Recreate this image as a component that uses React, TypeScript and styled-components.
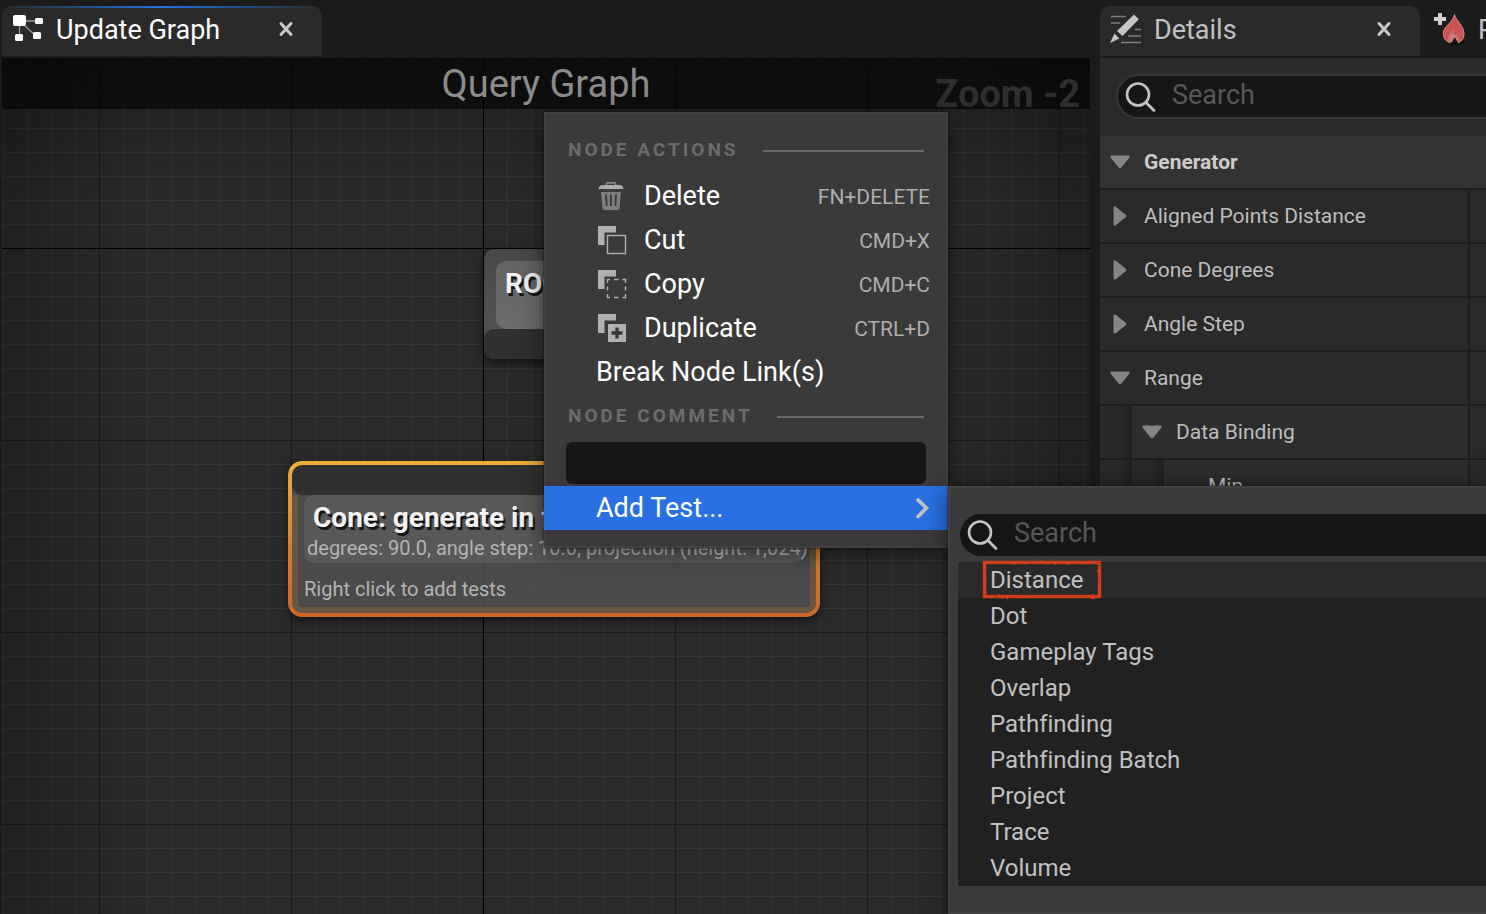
import React from "react";
import styled, { createGlobalStyle, css } from "styled-components";

const GlobalStyle = createGlobalStyle`
  *, *::before, *::after { box-sizing: border-box; }
  body {
    margin: 0;
    background: #1b1b1b;
    color: #c0c0c0;
    font-family: Roboto, "Liberation Sans", sans-serif;
    font-variant-ligatures: none;
  }
  button, input { font: inherit; color: inherit; border: 0; margin: 0; padding: 0; background: none; }
  button { cursor: pointer; text-align: left; }
`;

const Editor = styled.div`
  position: relative;
  display: grid;
  grid-template-columns: minmax(0, 1fr) 386px;
  column-gap: 10px;
  min-height: 100vh;
  padding-left: 2px;
  overflow: hidden;
`;

const Pane = styled.section`
  display: flex;
  flex-direction: column;
  gap: 2px;
  min-width: 0;
  overflow: hidden;
`;

/* ---------- tabs ---------- */

const TabBar = styled.div`
  display: flex;
  height: 56px;
  padding-top: 6px;
`;

const Tab = styled.div<{ $active?: boolean; $idle?: boolean }>`
  position: relative;
  display: flex;
  flex: none;
  align-items: center;
  width: 320px;
  padding: 0 24px 4px ${(p) => (p.$idle ? 14 : 10)}px;
  border-radius: 10px 10px 0 0;
  overflow: hidden;
  font-size: 27px;
  line-height: 32px;
  color: ${(p) => (p.$active ? "#ffffff" : "#c0c0c0")};
  background: ${(p) => (p.$idle ? "transparent" : "#2a2a2a")};
  ${(p) =>
    p.$active &&
    css`
      &::before {
        content: "";
        position: absolute;
        inset: 0 0 auto;
        height: 2px;
        background: linear-gradient(90deg, #2a2a2a, #1d4f86 25%, #2a6fe0 50%, #1d4f86 75%, #2a2a2a);
      }
    `}
`;

const TabTitle = styled.span`
  flex: 1;
  margin-left: 12px;
  padding-top: 2px;
  white-space: nowrap;
`;

const CloseButton = styled.button`
  display: flex;
  align-items: center;
  justify-content: center;
  width: 24px;
  height: 24px;
`;

/* ---------- graph canvas ---------- */

const Canvas = styled.div`
  position: relative;
  flex: 1;
  overflow: hidden;
  background-color: #2a2a2a;
  background-image:
    linear-gradient(90deg, rgba(0, 0, 0, 0.25), transparent 150px),
    linear-gradient(270deg, rgba(0, 0, 0, 0.25), transparent 150px),
    linear-gradient(180deg, rgba(0, 0, 0, 0.25), transparent 150px),
    linear-gradient(#000000, #000000),
    linear-gradient(#000000, #000000),
    linear-gradient(90deg, #191919 1px, transparent 1px),
    linear-gradient(180deg, #191919 1px, transparent 1px),
    linear-gradient(90deg, #363636 1px, transparent 1px),
    linear-gradient(180deg, #363636 1px, transparent 1px);
  background-size:
    auto, auto, auto,
    1px 100%, 100% 1px,
    192px 192px, 192px 192px,
    24px 24px, 24px 24px;
  background-position:
    0 0, 0 0, 0 0,
    481px 0, 0 190px,
    97px 0, 0 190px,
    1px 0, 0 22px;
  background-repeat:
    no-repeat, no-repeat, no-repeat,
    no-repeat, no-repeat,
    repeat, repeat, repeat, repeat;
`;

const GraphTitle = styled.h1`
  display: flex;
  align-items: center;
  justify-content: center;
  height: 51px;
  margin: 0;
  background: rgba(0, 0, 0, 0.6);
  color: #8c8c8c;
  font-size: 38px;
  font-weight: 400;
  line-height: 44px;
`;

const ZoomLabel = styled.div`
  position: absolute;
  top: 14px;
  right: 10px;
  color: #2e2e2e;
  font-size: 38px;
  font-weight: 700;
  line-height: 44px;
`;

const RootNode = styled.div`
  position: absolute;
  left: 482px;
  top: 191px;
  width: 190px;
  padding: 12px 12px 0;
  border-radius: 10px;
  overflow: hidden;
  background: linear-gradient(#484848, #555555);
  box-shadow: 0 4px 10px rgba(0, 0, 0, 0.6);
`;

const NodeHeading = styled.h2`
  margin: 0;
  color: #f2f2f2;
  font-size: 28px;
  font-weight: 700;
  line-height: 32px;
  text-shadow: 2px 3px 0 #161616;
  white-space: nowrap;
`;

const RootTitle = styled.div`
  height: 68px;
  padding: 7px 9px;
  border-radius: 10px;
  background: linear-gradient(#636363, #6c6c6c);
`;

const PinStrip = styled.div<{ $bottom?: boolean }>`
  height: 30px;
  background: #303030;
  border-radius: ${(p) => (p.$bottom ? "10px 10px 0 0" : "6px 6px 10px 10px")};
  margin: ${(p) => (p.$bottom ? "0 -12px" : "0")};
`;

const ConeNode = styled.div`
  position: absolute;
  left: 286px;
  top: 403px;
  width: 532px;
  padding: 4px;
  border-radius: 14px;
  background: rgba(80, 80, 80, 0.85);
  box-shadow: 0 4px 10px rgba(0, 0, 0, 0.5);

  &::before {
    content: "";
    position: absolute;
    inset: 0;
    padding: 4px;
    border-radius: 14px;
    background: linear-gradient(#efae3b, #d9822f 50%, #cd6627);
    mask: linear-gradient(#000 0 0) content-box exclude, linear-gradient(#000 0 0);
  }
`;

const ConeBody = styled.div`
  padding: 0 6px 4px;
  border: solid rgba(160, 110, 50, 0.35);
  border-width: 0 6px 6px;
  border-radius: 0 0 10px 10px;
`;

const ConeHeader = styled.div`
  height: 68px;
  padding: 7px 3px 0;
  border-radius: 10px;
  background: rgba(110, 110, 110, 0.4);

  ${NodeHeading} { padding-left: 6px; }
`;

const NodeText = styled.p`
  margin: 0;
  color: #b4b4b4;
  font-size: 20px;
  line-height: 28px;
  white-space: nowrap;
`;

const TestHint = styled(NodeText)`
  padding-top: 12px;
`;

/* ---------- details pane ---------- */

const DetailsBody = styled.div`
  flex: 1;
  background: #242424;
`;

const SearchRow = styled.div`
  padding: 16px 0 17px 16px;
  background: #2a2a2a;
`;

const SearchBox = styled.label<{ $framed?: boolean }>`
  display: flex;
  align-items: center;
  height: ${(p) => (p.$framed ? 45 : 42)}px;
  padding-left: 7px;
  border: solid #353535;
  border-width: ${(p) => (p.$framed ? "2px 0 2px 2px" : "0")};
  border-radius: 23px 0 0 23px;
  background: #161616;
`;

const SearchInput = styled.input`
  flex: 1;
  min-width: 0;
  height: 32px;
  margin: 0 0 4px 15px;
  outline: 0;
  font-size: 27px;
  line-height: 32px;
  &::placeholder { color: #575757; opacity: 1; }
`;

const Row = styled.div<{ $heading?: boolean }>`
  display: grid;
  grid-template-columns: ${(p) => (p.$heading ? "1fr" : "368px 1fr")};
  column-gap: 2px;
  height: 54px;
  padding-bottom: 2px;
  background: #1e1e1e;
`;

const NameCell = styled.div`
  display: flex;
  min-width: 0;
`;

const Indent = styled.span`
  width: 32px;
  background: linear-gradient(90deg, #292929 60%, #1f1f1f);
`;

const RowButton = styled.button<{ $heading?: boolean; $depth?: number }>`
  display: flex;
  flex: 1;
  align-items: center;
  padding-left: 10px;
  font-size: 21px;
  font-weight: ${(p) => (p.$heading ? 700 : 400)};
  line-height: 24px;
  color: ${(p) => (p.$heading ? "#cccccc" : "#bdbdbd")};
  background: ${(p) => (p.$heading ? "#333333" : p.$depth ? "#2d2d2d" : "#2a2a2a")};
`;

const ArrowSlot = styled.span`
  display: flex;
  align-items: center;
  justify-content: center;
  width: 20px;
  margin-right: 14px;
`;

const ValueCell = styled.div`
  background: #2a2a2a;
`;

/* ---------- menus ---------- */

const menuSurface = css`
  position: absolute;
  background: #3a3a3a;
  border: 2px solid #424242;
  box-shadow: 0 4px 24px rgba(0, 0, 0, 0.5), 0 0 2px #111111;
`;

const ContextMenu = styled.div`
  ${menuSurface}
  left: 544px;
  top: 112px;
  width: 404px;
  padding: 14px 0 16px;
`;

const MenuHeading = styled.div`
  display: flex;
  align-items: center;
  gap: 24px;
  height: 46px;
  padding: 0 22px;
  color: #6c6c6c;
  font-size: 19px;
  font-weight: 700;
  line-height: 24px;
  letter-spacing: 3px;
  white-space: nowrap;

  &::after {
    content: "";
    flex: 1;
    height: 2px;
    background: #6a6a6a;
  }
`;

const HeadingText = styled.span`
  padding-bottom: 2px;
`;

const MenuItem = styled.button<{ $selected?: boolean }>`
  display: flex;
  align-items: center;
  width: calc(100% + 4px);
  height: 44px;
  margin: 0 -2px;
  padding: 0 18px 0 52px;
  font-size: 27px;
  line-height: 32px;
  color: #ffffff;
  background: ${(p) => (p.$selected ? "#2970e2" : "transparent")};
`;

const ItemIcon = styled.span`
  display: flex;
  width: 32px;
  margin-right: 16px;
`;

const ItemLabel = styled.span`
  flex: 1;
`;

const Shortcut = styled.kbd`
  padding-top: 2px;
  font-family: inherit;
  font-size: 21px;
  color: #adadad;
`;

const CommentInput = styled.input`
  display: block;
  width: 360px;
  height: 42px;
  margin: 2px 20px;
  padding: 0 10px;
  border-radius: 6px;
  background: #161616;
  outline: 0;
  font-size: 21px;
`;

const TestMenu = styled.div`
  ${menuSurface}
  left: 948px;
  right: 0;
  top: 486px;
  padding: 26px 0 26px 8px;
  border-right: 0;

  ${SearchBox} { margin: 0 0 6px 2px; }
`;

const TestList = styled.ul`
  margin: 0;
  padding: 0;
  list-style: none;
  background: #212121;
`;

const TestItem = styled.li<{ $hover?: boolean }>`
  position: relative;
  height: 36px;
  background: ${(p) => (p.$hover ? "#2a2a2a" : "transparent")};
`;

const TestButton = styled.button`
  display: block;
  width: 100%;
  height: 36px;
  padding-left: 32px;
  font-size: 24px;
  line-height: 36px;
`;

const Marker = styled.svg`
  position: absolute;
  left: 22px;
  top: -4px;
  pointer-events: none;
`;

/* ---------- icons ---------- */

const GraphIcon = () => (
  <svg width="32" height="32" viewBox="0 0 32 32" aria-hidden="true">
    <path d="M12 8H26M7.500 10V24M12 12L25 24" stroke="#9a9a9a" strokeWidth="1.300" fill="none" />
    <g fill="#ffffff">
      <rect x="1" y="2" width="13" height="11" rx="2" />
      <rect x="23" y="5" width="8" height="6" rx="1.500" />
      <rect x="3" y="21" width="8" height="7" rx="1.500" />
      <rect x="21" y="19" width="8" height="7" rx="1.500" />
    </g>
  </svg>
);

const DetailsIcon = () => (
  <svg width="32" height="32" viewBox="0 0 32 32" aria-hidden="true">
    <path d="M1 3.500H16M1 10H10M25 16.500H31M18 23H31M11 29.500H31" stroke="#7d7d7d" strokeWidth="1.300" />
    <path d="M24 1.500L28.800 6.200 12.500 23 7 18z" fill="#c4c4c4" />
    <path d="M4.500 20.500L9.500 25.500 0 30z" fill="#c4c4c4" />
  </svg>
);

const FireIcon = () => (
  <svg width="32" height="34" viewBox="0 0 32 34" aria-hidden="true">
    <ellipse cx="20.500" cy="30" rx="10" ry="2.500" fill="#0c0c0c" />
    <path
      d="M20.500 2.500C21.500 8 30 13.500 30 22c0 4.500-2.500 7.500-5.500 8.800.8-3.300 0-6.300-1.800-8.600L20.500 25.500l-1.200-7.300c-3.500 3.300-5.300 8.300-3.800 12.600C11.700 29 9.300 26 9.300 21.500 9.300 14 19 11 20.500 2.500z"
      fill="#c95450"
      stroke="#d98a86"
      strokeWidth="1"
    />
    <path d="M15.500 30.500C14.500 26 16 22 18.700 19.800L20.500 25.500l2-2.300c1.700 2.500 2 4.800 1.200 7.300l-2.900-5-3 5z" fill="#d77b77" />
    <path d="M17.800 30.800l3-5.300 2.800 5.300z" fill="#151515" />
    <path d="M4 1h4v4h4v4H8v4H4V9H0V5h4z" fill="#cfcfcf" />
  </svg>
);

const CloseIcon = () => (
  <svg width="16" height="16" viewBox="0 0 16 16" aria-hidden="true">
    <path d="M3 2.500L13 13.500M13 2.500L3 13.500" stroke="#c8c8c8" strokeWidth="3" strokeLinecap="round" />
  </svg>
);

const SearchIcon = () => (
  <svg width="32" height="32" viewBox="0 0 32 32" aria-hidden="true">
    <circle cx="13" cy="13.500" r="11" stroke="#c4c4c4" strokeWidth="2.600" fill="none" />
    <path d="M21 21.500L29 29.500" stroke="#c4c4c4" strokeWidth="2.800" strokeLinecap="round" />
  </svg>
);

const Arrow = ({ open }: { open: boolean }) =>
  open ? (
    <svg width="20" height="14" viewBox="0 0 20 14" aria-hidden="true">
      <path d="M1 1H19V2.500L10.500 13H9.500L1 2.500z" fill="#858585" stroke="#858585" strokeLinejoin="round" />
    </svg>
  ) : (
    <svg width="14" height="20" viewBox="0 0 14 20" aria-hidden="true">
      <path d="M1 1H2.500L13 9.500V10.500L2.500 19H1z" fill="#858585" stroke="#858585" strokeLinejoin="round" />
    </svg>
  );

const TrashIcon = () => (
  <svg width="32" height="32" viewBox="0 0 32 32" aria-hidden="true">
    <path d="M10.500 5.500V4Q10.500 2.800 11.500 2.800H18.500Q19.500 2.800 19.500 4V5.500" stroke="#858585" strokeWidth="1.800" fill="none" />
    <path d="M2.500 9Q3 5 7 5H23Q27 5 27.500 9z" fill="#adadad" />
    <path d="M5 12H25L23.600 28Q23.400 30 21.500 30H8.500Q6.600 30 6.400 28z" fill="#7e7e7e" />
    <path d="M10 14.500L10.700 26M15 14.500V26M20 14.500L19.300 26" stroke="#3a3a3a" strokeWidth="1.900" />
  </svg>
);

const BackSquare = () => <path d="M2 2H20V8.500H8.500V21H2z" fill="#b0b0b0" />;

const CutIcon = () => (
  <svg width="32" height="32" viewBox="0 0 32 32" aria-hidden="true">
    <BackSquare />
    <rect x="11.500" y="11.500" width="18" height="18" stroke="#b0b0b0" strokeWidth="1.400" fill="none" />
  </svg>
);

const CopyIcon = () => (
  <svg width="32" height="32" viewBox="0 0 32 32" aria-hidden="true">
    <BackSquare />
    <path
      d="M11.500 15V11.500H14M18 11.500H22.500M26.500 11.500H29.500V15M29.500 18.500V22.500M29.500 26V29.500H26.500M22.500 29.500H18M14 29.500H11.500V26M11.500 22.500V18.500"
      stroke="#b0b0b0"
      strokeWidth="1.400"
      fill="none"
    />
  </svg>
);

const DuplicateIcon = () => (
  <svg width="32" height="32" viewBox="0 0 32 32" aria-hidden="true">
    <BackSquare />
    <rect x="12" y="12" width="18" height="18" fill="#b0b0b0" />
    <path d="M21 15.500V26.500M15.500 21H26.500" stroke="#3a3a3a" strokeWidth="3.400" />
  </svg>
);

const ChevronIcon = () => (
  <svg width="16" height="22" viewBox="0 0 16 22" aria-hidden="true">
    <path d="M4 3L12.500 11L4 19.500" stroke="#c4c4c4" strokeWidth="3.600" strokeLinecap="round" fill="none" />
  </svg>
);

/* ---------- data ---------- */

const menuActions = [
  { label: "Delete", shortcut: "FN+DELETE", icon: <TrashIcon /> },
  { label: "Cut", shortcut: "CMD+X", icon: <CutIcon /> },
  { label: "Copy", shortcut: "CMD+C", icon: <CopyIcon /> },
  { label: "Duplicate", shortcut: "CTRL+D", icon: <DuplicateIcon /> },
];

const tests = [
  "Distance",
  "Dot",
  "Gameplay Tags",
  "Overlap",
  "Pathfinding",
  "Pathfinding Batch",
  "Project",
  "Trace",
  "Volume",
];

type Property = { name: string; depth: number; open?: boolean; heading?: boolean };

const properties: Property[] = [
  { name: "Generator", depth: 0, open: true, heading: true },
  { name: "Aligned Points Distance", depth: 0, open: false },
  { name: "Cone Degrees", depth: 0, open: false },
  { name: "Angle Step", depth: 0, open: false },
  { name: "Range", depth: 0, open: true },
  { name: "Data Binding", depth: 1, open: true },
  { name: "Min", depth: 2 },
];

const PropertyRow = ({ name, depth, open, heading }: Property) => (
  <Row $heading={heading}>
    <NameCell>
      {Array.from({ length: depth }, (_, i) => (
        <Indent key={i} />
      ))}
      <RowButton $heading={heading} $depth={depth} aria-expanded={open}>
        <ArrowSlot>{open !== undefined && <Arrow open={open} />}</ArrowSlot>
        {name}
      </RowButton>
    </NameCell>
    {!heading && <ValueCell />}
  </Row>
);

export default function App() {
  return (
    <>
      <GlobalStyle />
      <Editor>
        <Pane>
          <TabBar>
            <Tab $active>
              <GraphIcon />
              <TabTitle>Update Graph</TabTitle>
              <CloseButton aria-label="Close Update Graph">
                <CloseIcon />
              </CloseButton>
            </Tab>
          </TabBar>
          <Canvas>
            <GraphTitle>Query Graph</GraphTitle>
            <ZoomLabel>Zoom -2</ZoomLabel>
            <RootNode>
              <RootTitle>
                <NodeHeading>ROOT</NodeHeading>
              </RootTitle>
              <PinStrip $bottom />
            </RootNode>
            <ConeNode>
              <PinStrip />
              <ConeBody>
                <ConeHeader>
                  <NodeHeading>Cone: generate in front of</NodeHeading>
                  <NodeText>degrees: 90.0, angle step: 10.0, projection (height: 1,024)</NodeText>
                </ConeHeader>
                <TestHint>Right click to add tests</TestHint>
              </ConeBody>
            </ConeNode>
          </Canvas>
        </Pane>

        <Pane>
          <TabBar>
            <Tab>
              <DetailsIcon />
              <TabTitle>Details</TabTitle>
              <CloseButton aria-label="Close Details">
                <CloseIcon />
              </CloseButton>
            </Tab>
            <Tab $idle>
              <FireIcon />
              <TabTitle>P</TabTitle>
            </Tab>
          </TabBar>
          <DetailsBody>
            <SearchRow>
              <SearchBox $framed>
                <SearchIcon />
                <SearchInput type="text" placeholder="Search" aria-label="Search details" />
              </SearchBox>
            </SearchRow>
            {properties.map((p) => (
              <PropertyRow key={p.name} {...p} />
            ))}
          </DetailsBody>
        </Pane>

        <ContextMenu>
          <MenuHeading>
            <HeadingText>NODE ACTIONS</HeadingText>
          </MenuHeading>
          {menuActions.map((a) => (
            <MenuItem key={a.label}>
              <ItemIcon>{a.icon}</ItemIcon>
              <ItemLabel>{a.label}</ItemLabel>
              <Shortcut>{a.shortcut}</Shortcut>
            </MenuItem>
          ))}
          <MenuItem>Break Node Link(s)</MenuItem>
          <MenuHeading>
            <HeadingText>NODE COMMENT</HeadingText>
          </MenuHeading>
          <CommentInput type="text" aria-label="Node comment" />
          <MenuItem $selected>
            <ItemLabel>Add Test...</ItemLabel>
            <ChevronIcon />
          </MenuItem>
        </ContextMenu>

        <TestMenu>
          <SearchBox>
            <SearchIcon />
            <SearchInput type="text" placeholder="Search" aria-label="Search tests" />
          </SearchBox>
          <TestList>
            {tests.map((t, i) => (
              <TestItem key={t} $hover={i === 0}>
                <TestButton>{t}</TestButton>
                {i === 0 && (
                  <Marker width="124" height="44" viewBox="0 0 124 44" aria-hidden="true">
                    <filter id="rough" x="-5%" y="-10%" width="110%" height="120%">
                      <feTurbulence type="fractalNoise" baseFrequency="0.35" numOctaves="2" seed="4" />
                      <feDisplacementMap in="SourceGraphic" scale="2" />
                    </filter>
                    <rect x="4.500" y="4.500" width="115" height="34" fill="none" stroke="#d23c1e" strokeWidth="3.400" filter="url(#rough)" />
                  </Marker>
                )}
              </TestItem>
            ))}
          </TestList>
        </TestMenu>
      </Editor>
    </>
  );
}
